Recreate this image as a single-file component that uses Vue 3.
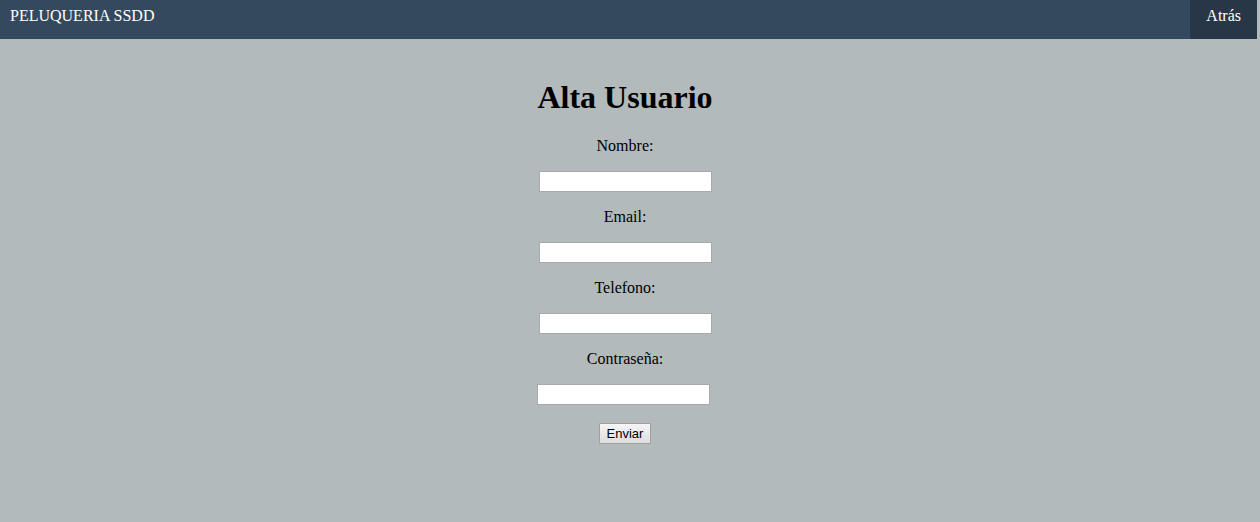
<script setup>
import { reactive } from 'vue'

const form = reactive({ nombre: '', email: '', telefono: '', contrasena: '' })
const fields = [
  { id: 'nombre', label: 'Nombre:', type: 'text' },
  { id: 'email', label: 'Email:', type: 'text' },
  { id: 'telefono', label: 'Telefono:', type: 'text' },
  { id: 'contrasena', label: 'Contraseña:', type: 'password' }
]
</script>

<template>
  <div class="page">
    <nav class="bar">
      <span class="brand">PELUQUERIA SSDD</span>
      <a class="back" href="#">Atrás</a>
    </nav>
    <main class="content">
      <h1>Alta Usuario</h1>
      <form class="form" @submit.prevent>
        <div v-for="f in fields" :key="f.id" class="field" :class="f.type">
          <label :for="f.id">{{ f.label }}</label>
          <input :id="f.id" v-model="form[f.id]" :type="f.type" />
        </div>
        <button type="submit">Enviar</button>
      </form>
    </main>
  </div>
</template>

<style>
body {
  background: #b2babb;
}
</style>

<style scoped>
.page {
  font-family: "Liberation Serif", "Times New Roman", serif;
  font-size: 16px;
  line-height: 18px;
  color: #000;
}
.bar {
  display: flex;
  justify-content: space-between;
  margin-right: 3px;
  background: #34495e;
  color: #fff;
}
.brand {
  padding: 7px 10px 14px;
}
.back {
  padding: 7px 16px 14px;
  background: #283747;
  color: #fff;
  text-decoration: none;
}
.content {
  display: flex;
  flex-direction: column;
  align-items: center;
  padding: 39px 10px 0 0;
}
h1 {
  margin: 0 0 21px;
  font-size: 32px;
  line-height: 38px;
}
.form,
.field {
  display: flex;
  flex-direction: column;
  align-items: center;
}
.field {
  gap: 16px;
  margin-bottom: 16px;
}
.field.password {
  margin-bottom: 18px;
}
.field.password input {
  margin-right: 4px;
}
input {
  box-sizing: border-box;
  width: 173px;
  height: 21px;
  padding: 1px 2px;
  border: 1px solid #a9a9a9;
  background: #fff;
  font: 13px "Liberation Sans", Arial, sans-serif;
}
button {
  box-sizing: border-box;
  height: 21px;
  padding: 0 7px;
  border: 1px solid #a0a0a0;
  border-radius: 1px;
  background: linear-gradient(#f6f6f6, #dddddd);
  color: #000;
  font: 13px "Liberation Sans", Arial, sans-serif;
}
</style>
